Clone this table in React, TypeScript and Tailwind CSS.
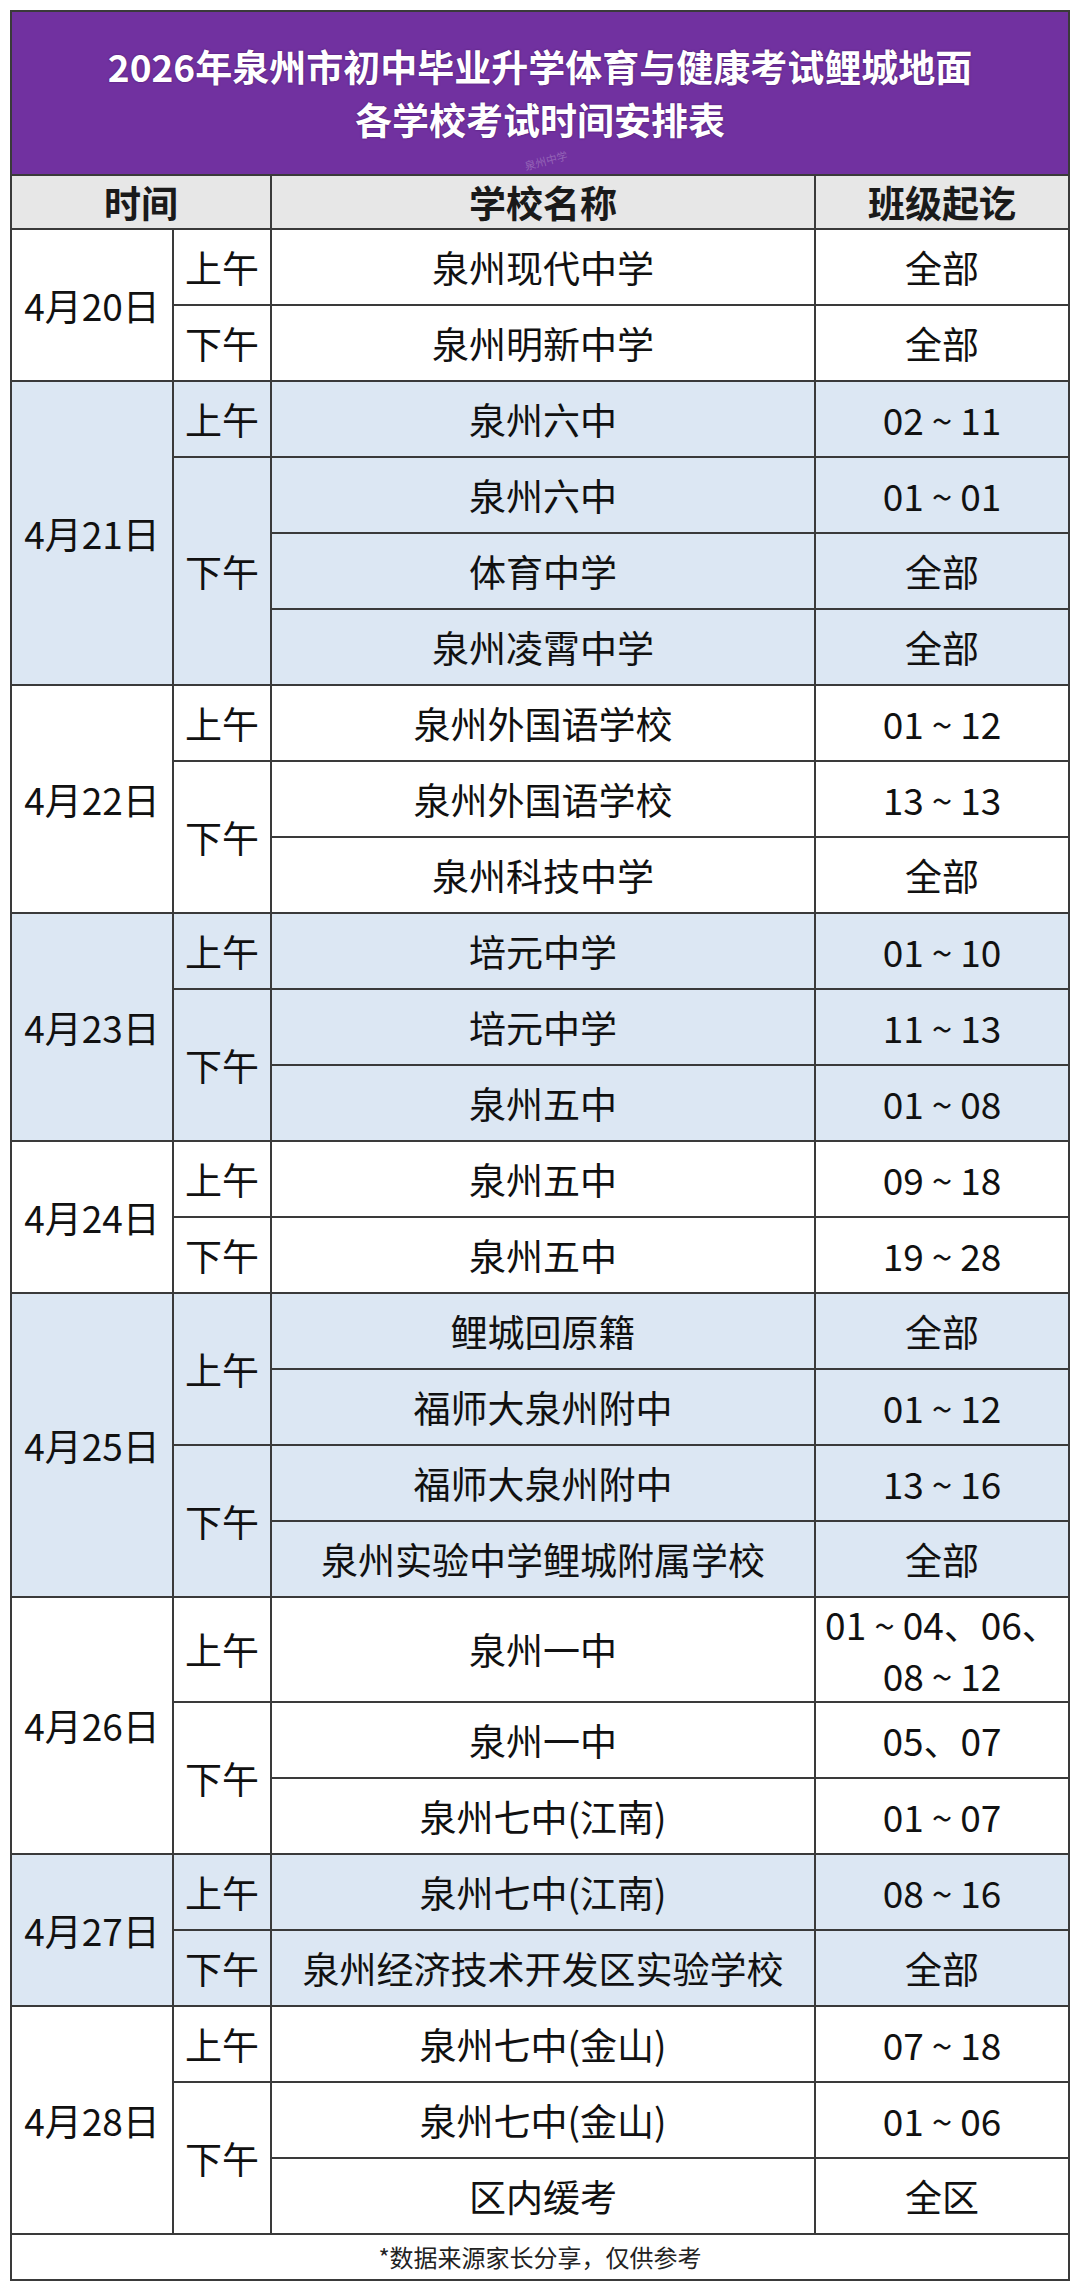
import React from "react";

type Row = { school: string; cls: string; tall?: boolean };
type Half = { label: string; rows: Row[] };
type Group = { date: string; blue: boolean; halves: Half[] };

const groups: Group[] = [
  {
    date: "4月20日",
    blue: false,
    halves: [
      { label: "上午", rows: [{ school: "泉州现代中学", cls: "全部" }] },
      { label: "下午", rows: [{ school: "泉州明新中学", cls: "全部" }] },
    ],
  },
  {
    date: "4月21日",
    blue: true,
    halves: [
      { label: "上午", rows: [{ school: "泉州六中", cls: "02～11" }] },
      {
        label: "下午",
        rows: [
          { school: "泉州六中", cls: "01～01" },
          { school: "体育中学", cls: "全部" },
          { school: "泉州凌霄中学", cls: "全部" },
        ],
      },
    ],
  },
  {
    date: "4月22日",
    blue: false,
    halves: [
      { label: "上午", rows: [{ school: "泉州外国语学校", cls: "01～12" }] },
      {
        label: "下午",
        rows: [
          { school: "泉州外国语学校", cls: "13～13" },
          { school: "泉州科技中学", cls: "全部" },
        ],
      },
    ],
  },
  {
    date: "4月23日",
    blue: true,
    halves: [
      { label: "上午", rows: [{ school: "培元中学", cls: "01～10" }] },
      {
        label: "下午",
        rows: [
          { school: "培元中学", cls: "11～13" },
          { school: "泉州五中", cls: "01～08" },
        ],
      },
    ],
  },
  {
    date: "4月24日",
    blue: false,
    halves: [
      { label: "上午", rows: [{ school: "泉州五中", cls: "09～18" }] },
      { label: "下午", rows: [{ school: "泉州五中", cls: "19～28" }] },
    ],
  },
  {
    date: "4月25日",
    blue: true,
    halves: [
      {
        label: "上午",
        rows: [
          { school: "鲤城回原籍", cls: "全部" },
          { school: "福师大泉州附中", cls: "01～12" },
        ],
      },
      {
        label: "下午",
        rows: [
          { school: "福师大泉州附中", cls: "13～16" },
          { school: "泉州实验中学鲤城附属学校", cls: "全部" },
        ],
      },
    ],
  },
  {
    date: "4月26日",
    blue: false,
    halves: [
      { label: "上午", rows: [{ school: "泉州一中", cls: "01～04、06、\n08～12", tall: true }] },
      {
        label: "下午",
        rows: [
          { school: "泉州一中", cls: "05、07" },
          { school: "泉州七中(江南)", cls: "01～07" },
        ],
      },
    ],
  },
  {
    date: "4月27日",
    blue: true,
    halves: [
      { label: "上午", rows: [{ school: "泉州七中(江南)", cls: "08～16" }] },
      { label: "下午", rows: [{ school: "泉州经济技术开发区实验学校", cls: "全部" }] },
    ],
  },
  {
    date: "4月28日",
    blue: false,
    halves: [
      { label: "上午", rows: [{ school: "泉州七中(金山)", cls: "07～18" }] },
      {
        label: "下午",
        rows: [
          { school: "泉州七中(金山)", cls: "01～06" },
          { school: "区内缓考", cls: "全区" },
        ],
      },
    ],
  },
];

function ClsText({ text }: { text: string }) {
  const lines = text.split("\n");
  return (
    <>
      {lines.map((line, li) => {
        const parts = line.split("～");
        return (
          <div key={li}>
            {parts.map((p, pi) => (
              <React.Fragment key={pi}>
                {pi > 0 && <span className="inline-block mx-[8px]">~</span>}
                {p}
              </React.Fragment>
            ))}
          </div>
        );
      })}
    </>
  );
}

function GroupBlock({ g }: { g: Group }) {
  const bg = g.blue ? "bg-[#dce7f3]" : "bg-white";
  return (
    <div className="flex gap-[2px]">
      <div className={`w-[160px] shrink-0 flex items-center justify-center ${bg}`}>{g.date}</div>
      <div className="flex-1 flex flex-col gap-[2px]">
        {g.halves.map((h, hi) => (
          <div key={hi} className="flex gap-[2px]">
            <div className={`w-[96px] shrink-0 flex items-center justify-center ${bg}`}>{h.label}</div>
            <div className="flex-1 flex flex-col gap-[2px]">
              {h.rows.map((r, ri) => (
                <div key={ri} className={`flex gap-[2px] ${r.tall ? "h-[103px]" : "h-[74px]"}`}>
                  <div className={`w-[542px] shrink-0 flex items-center justify-center ${bg}`}>{r.school}</div>
                  <div
                    className={`flex-1 flex flex-col items-center justify-center text-center whitespace-nowrap ${
                      r.tall ? "leading-[51px]" : ""
                    } ${bg}`}
                  >
                    <ClsText text={r.cls} />
                  </div>
                </div>
              ))}
            </div>
          </div>
        ))}
      </div>
    </div>
  );
}

export default function App() {
  return (
    <div className="min-h-screen bg-white pt-[10px] pl-[10px] font-['Noto_Sans_CJK_SC','Noto_Sans',sans-serif] text-[#111]">
      <div className="w-[1060px] bg-[#3a3a3a] p-[2px] flex flex-col gap-[2px] text-[37px] leading-none">
        <div className="relative h-[162px] bg-[#7131a0] flex flex-col items-center justify-center gap-[16px] text-white font-bold text-[37px] [text-shadow:0_0_2px_rgba(40,0,60,0.6)]">
          <div>2026年泉州市初中毕业升学体育与健康考试鲤城地面</div>
          <div>各学校考试时间安排表</div>
          <span className="absolute left-[512px] top-[143px] -rotate-[15deg] text-[11px] leading-none font-normal text-white/25 [text-shadow:none]">
            泉州中学
          </span>
        </div>
        <div className="h-[52px] flex gap-[2px] font-bold text-[#1a1a1a]">
          <div className="w-[258px] shrink-0 bg-[#e7e7e7] flex items-center justify-center">时间</div>
          <div className="w-[542px] shrink-0 bg-[#e7e7e7] flex items-center justify-center">学校名称</div>
          <div className="flex-1 bg-[#e7e7e7] flex items-center justify-center">班级起讫</div>
        </div>
        {groups.map((g, i) => (
          <GroupBlock key={i} g={g} />
        ))}
        <div className="h-[44px] bg-white flex items-center justify-center text-[24px] text-[#222]">
          *数据来源家长分享，仅供参考
        </div>
      </div>
    </div>
  );
}
